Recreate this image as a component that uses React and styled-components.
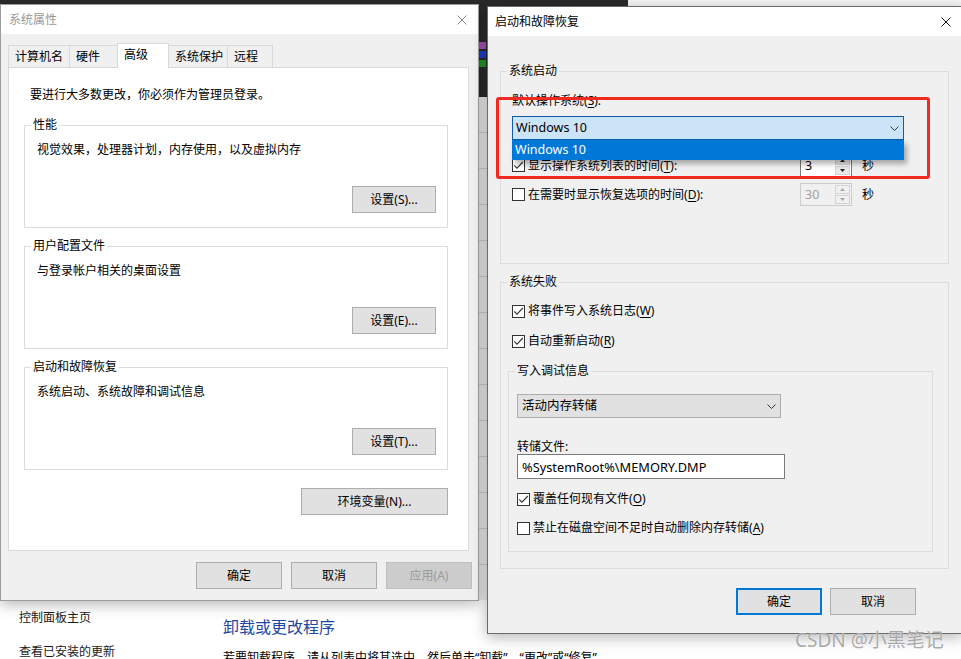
import React from 'react';
import styled, { createGlobalStyle } from 'styled-components';

const GlobalStyle = createGlobalStyle`
  html, body {
    margin: 0;
    padding: 0;
  }
  body {
    width: 961px;
    height: 659px;
    overflow: hidden;
    font-family: "Noto Sans", "Noto Sans CJK SC", sans-serif;
    font-size: 12px;
    line-height: 16px;
    color: #000;
  }
`;

const Desktop = styled.div`
  position: relative;
  width: 961px;
  height: 659px;
  overflow: hidden;
  background: #2b2b2b;
`;

const TopSheet = styled.div`
  position: absolute;
  left: 628px;
  top: 0;
  width: 340px;
  height: 10px;
  background: #f7f7f7;
`;

const DeskIcons = styled.div`
  position: absolute;
  left: 476px;
  top: 42px;
  display: flex;
  flex-direction: column;
  gap: 2px;
`;

const DeskMark = styled.span`
  display: block;
  width: 10px;
  height: 7px;
  background: ${({ $c }) => $c};
`;

/* control panel window behind the dialogs */
const ControlPanel = styled.div`
  position: absolute;
  left: 0;
  right: 0;
  top: 97px;
  bottom: 0;
  display: flex;
  flex-direction: column;
`;

const ListArea = styled.div`
  height: 503px;
  flex-shrink: 0;
  background: #efefef
    repeating-linear-gradient(to bottom, transparent 0 35px, #d2d2d2 35px 36px);
`;

const Lower = styled.div`
  flex: 1;
  background: #fff;
  display: flex;
`;

const SideNav = styled.div`
  width: 204px;
  padding: 10px 0 0 19px;
  display: flex;
  flex-direction: column;
  gap: 18px;
  color: #1a1a1a;
`;

const CpMain = styled.div`
  padding-top: 16px;
`;

const CpHeading = styled.div`
  font-size: 16px;
  line-height: 22px;
  color: #1e46a2;
`;

const CpText = styled.div`
  margin-top: 12px;
  white-space: nowrap;
`;

/* dialog windows */
const Win = styled.div`
  position: absolute;
  left: ${({ $x }) => $x}px;
  top: ${({ $y }) => $y}px;
  width: ${({ $w }) => $w}px;
  height: ${({ $h }) => $h}px;
  box-sizing: border-box;
  background: #f0f0f0;
  border: 1px solid ${({ $active }) => ($active ? '#6b6b6b' : '#9c9c9c')};
  box-shadow: 0 3px 14px rgba(0, 0, 0, 0.3);
  display: flex;
  flex-direction: column;
`;

const TitleBar = styled.div`
  height: 29px;
  flex-shrink: 0;
  background: #fff;
  display: flex;
  align-items: center;
  padding: 0 11px 0 ${({ $pl }) => $pl}px;
`;

const Title = styled.div`
  flex: 1;
  color: ${({ $active }) => ($active ? '#000' : '#999')};
`;

const CloseIcon = ({ color }) => (
  <svg width="10" height="10" viewBox="0 0 10 10">
    <path d="M0.5 0.5 L9.5 9.5 M9.5 0.5 L0.5 9.5" stroke={color} strokeWidth="1" fill="none" />
  </svg>
);

const LeftBody = styled.div`
  flex: 1;
  padding: 9px 0 0 7px;
  display: flex;
  flex-direction: column;
`;

const TabRow = styled.div`
  display: flex;
  align-items: flex-end;
  height: 24px;
`;

const Tab = styled.div`
  position: relative;
  z-index: ${({ $sel }) => ($sel ? 1 : 0)};
  width: ${({ $w }) => $w}px;
  height: ${({ $sel }) => ($sel ? 25 : 22)}px;
  margin-bottom: ${({ $sel }) => ($sel ? -1 : 0)}px;
  margin-left: -1px;
  box-sizing: border-box;
  border: 1px solid #d9d9d9;
  border-bottom: none;
  background: ${({ $sel }) => ($sel ? '#fff' : '#f0f0f0')};
  padding-left: 6px;
  display: flex;
  align-items: center;
  padding-bottom: ${({ $sel }) => ($sel ? 2 : 0)}px;

  &:first-child {
    margin-left: 0;
  }
`;

const TabPanel = styled.div`
  width: 461px;
  height: 484px;
  box-sizing: border-box;
  background: #fff;
  border: 1px solid #d9d9d9;
  padding: 19px 20px 0 15px;
  display: flex;
  flex-direction: column;
`;

const Intro = styled.div`
  margin-left: 6px;
`;

const Group = styled.div`
  height: ${({ $h }) => $h}px;
  margin-top: ${({ $mt }) => $mt}px;
  box-sizing: border-box;
  border: 1px solid #dcdcdc;
  display: flex;
  flex-direction: column;
`;

const InnerGroup = styled(Group)`
  margin-left: 7px;
  margin-right: 15px;
`;

const Legend = styled.div`
  align-self: flex-start;
  margin: -9px 0 0 6px;
  padding: 0 2px;
  background: ${({ $bg }) => $bg};
`;

const GroupText = styled.div`
  margin: 9px 0 0 12px;
`;

const Button = styled.button`
  width: ${({ $w }) => $w || 86}px;
  height: 27px;
  flex-shrink: 0;
  box-sizing: border-box;
  padding: 0;
  font-family: inherit;
  font-size: 12px;
  line-height: 16px;
  background: ${({ disabled }) => (disabled ? '#cccccc' : '#e1e1e1')};
  color: ${({ disabled }) => (disabled ? '#9a9a9a' : '#000')};
  border: ${({ $default, disabled }) =>
    $default ? '2px solid #0078d7' : `1px solid ${disabled ? '#bfbfbf' : '#adadad'}`};
`;

const GroupButton = styled(Button)`
  margin: auto 11px 14px auto;
`;

const EnvButton = styled(Button)`
  align-self: flex-end;
  margin-top: 18px;
`;

const ButtonRow = styled.div`
  display: flex;
  justify-content: flex-end;
  gap: ${({ $gap }) => $gap}px;
  margin-top: ${({ $mt }) => $mt}px;
  margin-right: ${({ $mr }) => $mr}px;
`;

/* access key, e.g. (S) with the letter underlined */
const Paren = styled.span`
  font-family: "Noto Sans", sans-serif;

  u {
    text-underline-offset: 2px;
  }
`;

const Key = ({ k }) => (
  <Paren>
    (<u>{k}</u>)
  </Paren>
);

/* right dialog parts */
const RightBody = styled.div`
  flex: 1;
  padding: 0 13px 0 12px;
  display: flex;
  flex-direction: column;
`;

const FieldLabel = styled.div`
  margin: ${({ $mt }) => $mt}px 0 0 ${({ $ml }) => $ml}px;
  line-height: ${({ $lh }) => $lh || 16}px;
`;

const Combo = styled.div`
  position: relative;
  margin: 7px 0 0 11px;
  width: 392px;
  height: 24px;
  box-sizing: border-box;
  border: 1px solid #0f5ca8;
  background: #cce4f7;
  display: flex;
  align-items: center;
  padding: 0 4px 0 3px;
`;

const ComboText = styled.span`
  flex: 1;
  font-size: 12.5px;
`;

const DropList = styled.div`
  position: absolute;
  z-index: 3;
  left: -1px;
  right: -1px;
  top: calc(100% + 1px);
  height: 20px;
  background: #0078d7;
  color: #fff;
  font-size: 12.5px;
  display: flex;
  align-items: center;
  padding-left: 3px;
  box-shadow: 3px 4px 5px rgba(0, 0, 0, 0.3);
`;

const Select = styled.div`
  margin: 15px 0 0 8px;
  width: 264px;
  height: 24px;
  box-sizing: border-box;
  border: 1px solid #adadad;
  background: #e1e1e1;
  display: flex;
  align-items: center;
  padding: 0 4px 0 4px;
`;

const Chevron = () => (
  <svg width="9" height="5" viewBox="0 0 9 5">
    <path d="M0.5 0.5 L4.5 4.5 L8.5 0.5" stroke="#333" strokeWidth="1" fill="none" />
  </svg>
);

const TextInput = styled.div`
  margin: 0 0 0 8px;
  width: 268px;
  height: 25px;
  box-sizing: border-box;
  border: 1px solid #7a7a7a;
  background: #fff;
  display: flex;
  align-items: center;
  padding-left: 4px;
  font-size: 12.8px;
`;

const TimeRow = styled.div`
  display: grid;
  grid-template-columns: 289px 52px auto;
  column-gap: 10px;
  align-items: center;
  height: 23px;
  margin-top: ${({ $mt }) => $mt}px;
`;

const CheckLabel = styled.label`
  display: flex;
  align-items: center;
  gap: 3px;
  line-height: 16px;
  margin: ${({ $mt }) => $mt || 0}px 0 0 ${({ $ml }) => $ml}px;
`;

const Box = styled.span`
  width: 13px;
  height: 13px;
  flex-shrink: 0;
  box-sizing: border-box;
  border: 1px solid #333;
  background: #fff;
  display: inline-flex;
`;

const Check = ({ checked }) => (
  <Box>
    {checked && (
      <svg width="11" height="11" viewBox="0 0 11 11">
        <path d="M1.2 5.3 L4 8.2 L9.8 2" stroke="#333" strokeWidth="1.1" fill="none" />
      </svg>
    )}
  </Box>
);

const Spinner = styled.div`
  height: 23px;
  box-sizing: border-box;
  border: 1px solid ${({ $disabled }) => ($disabled ? '#cccccc' : '#7a7a7a')};
  background: ${({ $disabled }) => ($disabled ? '#f0f0f0' : '#fff')};
  color: ${({ $disabled }) => ($disabled ? '#a0a0a0' : '#000')};
  display: flex;
`;

const SpinValue = styled.span`
  flex: 1;
  padding-left: 4px;
  display: flex;
  align-items: center;
  font-size: 12.5px;
`;

const SpinCol = styled.div`
  width: 15px;
  display: flex;
  flex-direction: column;
  gap: 1px;
  padding: 1px 1px 1px 0;
`;

const SpinBtn = styled.div`
  flex: 1;
  box-sizing: border-box;
  border: 1px solid #d4d4d4;
  background: ${({ $disabled }) => ($disabled ? '#f0f0f0' : '#e9e9e9')};
  display: flex;
  align-items: center;
  justify-content: center;
`;

const Tri = ({ up, color }) => (
  <svg width="5" height="3" viewBox="0 0 5 3">
    <path d={up ? 'M0 3 L2.5 0 L5 3 Z' : 'M0 0 L5 0 L2.5 3 Z'} fill={color} />
  </svg>
);

const SpinField = ({ value, disabled }) => {
  const c = disabled ? '#a8a8a8' : '#222';
  return (
    <Spinner $disabled={disabled}>
      <SpinValue>{value}</SpinValue>
      <SpinCol>
        <SpinBtn $disabled={disabled}>
          <Tri up color={c} />
        </SpinBtn>
        <SpinBtn $disabled={disabled}>
          <Tri color={c} />
        </SpinBtn>
      </SpinCol>
    </Spinner>
  );
};

const Annotation = styled.div`
  position: absolute;
  z-index: 5;
  left: 496px;
  top: 97px;
  width: 434px;
  height: 82px;
  box-sizing: border-box;
  border: 3px solid #f2291e;
  border-radius: 3px;
`;

const Watermark = styled.div`
  position: absolute;
  z-index: 6;
  left: 795px;
  top: 628px;
  font-size: 19px;
  line-height: 24px;
  color: rgba(140, 140, 140, 0.75);
  white-space: nowrap;
  text-shadow: 0 0 1px #fff;
`;

const tabs = [
  { name: '计算机名', w: 62 },
  { name: '硬件', w: 49 },
  { name: '高级', w: 52, sel: true },
  { name: '系统保护', w: 60 },
  { name: '远程', w: 46 },
];

const groups = [
  { title: '性能', text: '视觉效果，处理器计划，内存使用，以及虚拟内存', btn: '设置(S)...', mt: 22 },
  { title: '用户配置文件', text: '与登录帐户相关的桌面设置', btn: '设置(E)...', mt: 18 },
  { title: '启动和故障恢复', text: '系统启动、系统故障和调试信息', btn: '设置(T)...', mt: 18 },
];

function SystemProperties() {
  return (
    <Win $x={0} $y={4} $w={479} $h={597}>
      <TitleBar $pl={8}>
        <Title>系统属性</Title>
        <CloseIcon color="#8a8a8a" />
      </TitleBar>
      <LeftBody>
        <TabRow>
          {tabs.map((t) => (
            <Tab key={t.name} $w={t.w} $sel={t.sel}>
              {t.name}
            </Tab>
          ))}
        </TabRow>
        <TabPanel>
          <Intro>要进行大多数更改，你必须作为管理员登录。</Intro>
          {groups.map((g) => (
            <Group key={g.title} $h={103} $mt={g.mt}>
              <Legend $bg="#fff">{g.title}</Legend>
              <GroupText>{g.text}</GroupText>
              <GroupButton $w={84}>{g.btn}</GroupButton>
            </Group>
          ))}
          <EnvButton $w={147}>环境变量(N)...</EnvButton>
        </TabPanel>
        <ButtonRow $gap={9} $mt={11} $mr={6}>
          <Button>确定</Button>
          <Button>取消</Button>
          <Button disabled>应用(A)</Button>
        </ButtonRow>
      </LeftBody>
    </Win>
  );
}

function StartupRecovery() {
  return (
    <Win $x={487} $y={6} $w={476} $h={628} $active>
      <TitleBar $pl={7}>
        <Title $active>启动和故障恢复</Title>
        <CloseIcon color="#111" />
      </TitleBar>
      <RightBody>
        <Group $h={193} $mt={35}>
          <Legend $bg="#f0f0f0">系统启动</Legend>
          <FieldLabel $mt={14} $ml={11}>
            默认操作系统<Key k="S" />:
          </FieldLabel>
          <Combo>
            <ComboText>Windows 10</ComboText>
            <Chevron />
            <DropList>Windows 10</DropList>
          </Combo>
          <TimeRow $mt={14}>
            <CheckLabel $ml={11}>
              <Check checked />
              <span>
                显示操作系统列表的时间<Key k="T" />:
              </span>
            </CheckLabel>
            <SpinField value="3" />
            <span>秒</span>
          </TimeRow>
          <TimeRow $mt={6}>
            <CheckLabel $ml={11}>
              <Check />
              <span>
                在需要时显示恢复选项的时间<Key k="D" />:
              </span>
            </CheckLabel>
            <SpinField value="30" disabled />
            <span>秒</span>
          </TimeRow>
        </Group>

        <Group $h={287} $mt={18}>
          <Legend $bg="#f0f0f0">系统失败</Legend>
          <CheckLabel $mt={13} $ml={11}>
            <Check checked />
            <span>
              将事件写入系统日志<Key k="W" />
            </span>
          </CheckLabel>
          <CheckLabel $mt={14} $ml={11}>
            <Check checked />
            <span>
              自动重新启动<Key k="R" />
            </span>
          </CheckLabel>
          <InnerGroup $h={181} $mt={22}>
            <Legend $bg="#f0f0f0">写入调试信息</Legend>
            <Select>
              <ComboText>活动内存转储</ComboText>
              <Chevron />
            </Select>
            <FieldLabel $mt={22} $ml={8} $lh={14}>
              转储文件:
            </FieldLabel>
            <TextInput>%SystemRoot%\MEMORY.DMP</TextInput>
            <CheckLabel $mt={12} $ml={8}>
              <Check checked />
              <span>
                覆盖任何现有文件<Key k="O" />
              </span>
            </CheckLabel>
            <CheckLabel $mt={13} $ml={8}>
              <Check />
              <span>
                禁止在磁盘空间不足时自动删除内存转储<Key k="A" />
              </span>
            </CheckLabel>
          </InnerGroup>
        </Group>

        <ButtonRow $gap={8} $mt={19} $mr={33}>
          <Button $default>确定</Button>
          <Button>取消</Button>
        </ButtonRow>
      </RightBody>
    </Win>
  );
}

export default function App() {
  return (
    <>
      <GlobalStyle />
      <Desktop>
        <TopSheet />
        <DeskIcons>
          <DeskMark $c="#b04fc0" />
          <DeskMark $c="#1f3fd0" />
          <DeskMark $c="#1f9a2a" />
        </DeskIcons>
        <ControlPanel>
          <ListArea />
          <Lower>
            <SideNav>
              <span>控制面板主页</span>
              <span>查看已安装的更新</span>
            </SideNav>
            <CpMain>
              <CpHeading>卸载或更改程序</CpHeading>
              <CpText>若要卸载程序，请从列表中将其选中，然后单击“卸载”、“更改”或“修复”。</CpText>
            </CpMain>
          </Lower>
        </ControlPanel>
        <SystemProperties />
        <StartupRecovery />
        <Annotation />
        <Watermark>CSDN @小黑笔记</Watermark>
      </Desktop>
    </>
  );
}
